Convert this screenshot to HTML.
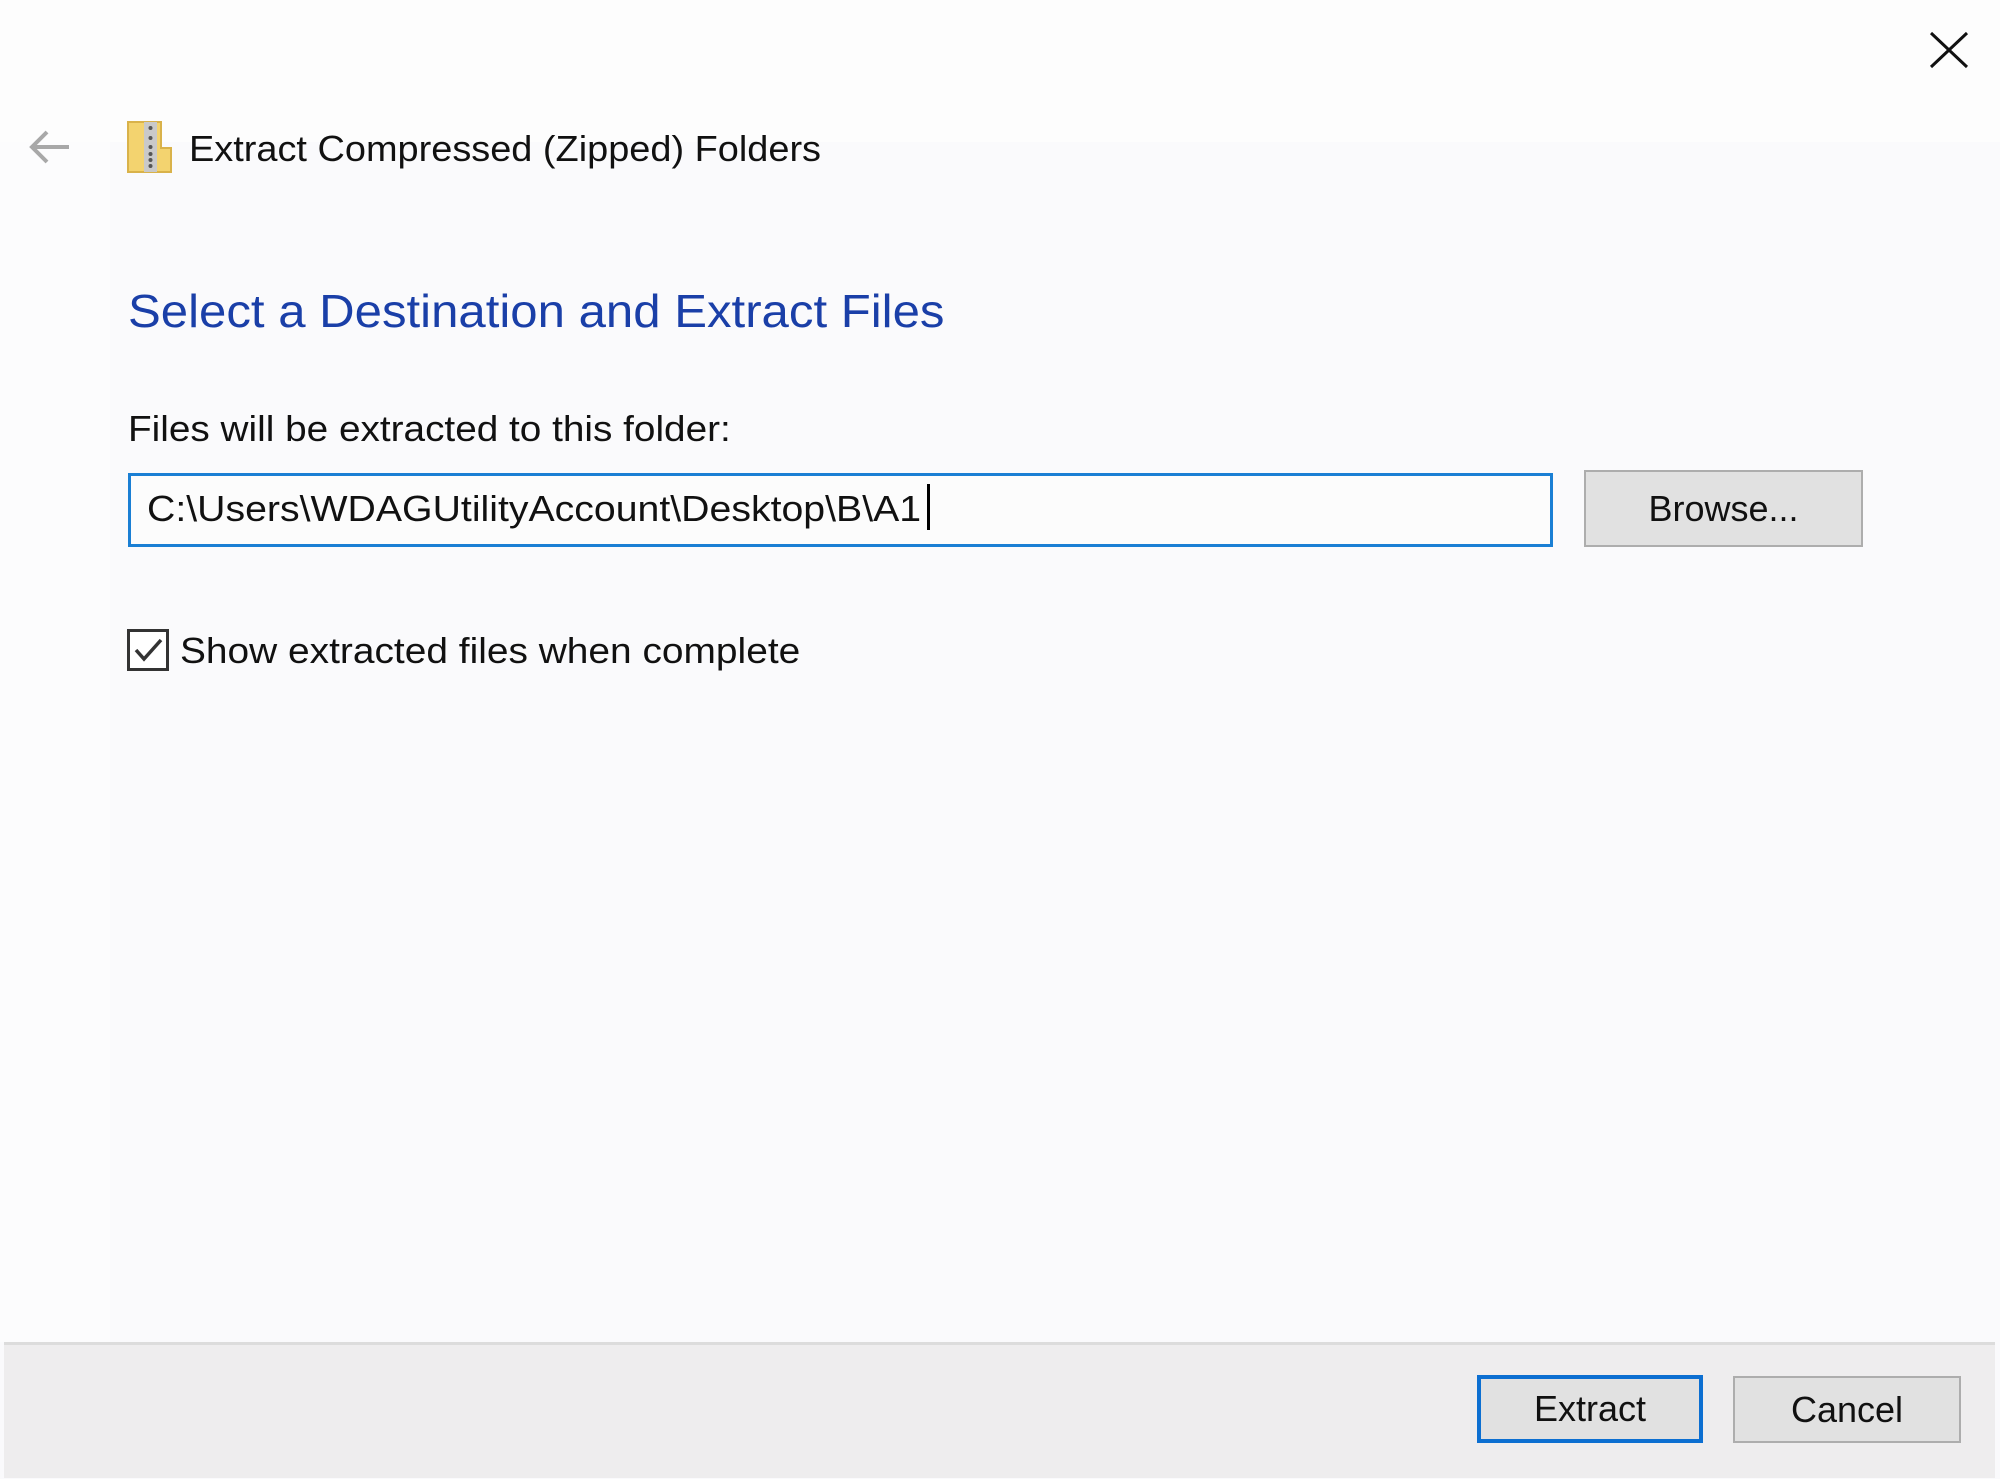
<!DOCTYPE html>
<html><head><meta charset="utf-8"><style>
html,body{margin:0;padding:0;}
body{width:2000px;height:1479px;position:relative;overflow:hidden;background:#fafafc;font-family:"Liberation Sans",sans-serif;color:#000;}
.a{position:absolute;white-space:nowrap;}
.sx{display:inline-block;transform-origin:0 0;}
</style></head><body>
<div class="a" style="left:0;top:0;width:2000px;height:142px;background:#fdfdfd"></div>
<div class="a" style="left:0;top:142px;width:110px;height:1200px;background:#fcfcfd"></div>
<svg class="a" style="left:1928px;top:30px" width="42" height="40" viewBox="0 0 42 40"><path d="M3 3 L39 37 M39 3 L3 37" stroke="#111" stroke-width="3" fill="none"/></svg>
<svg class="a" style="left:27px;top:128px" width="44" height="40" viewBox="0 0 44 40"><path d="M42 19 H5 M20 4 L5 19 L20 34" stroke="#a8a8a8" stroke-width="4" fill="none"/></svg>
<svg class="a" style="left:127px;top:120px" width="46" height="53" viewBox="0 0 46 53">
<path d="M1 2 H34 V28 H44 V52 H1 Z" fill="#f3d36f" stroke="#d9b24a" stroke-width="2"/>
<rect x="17" y="2" width="13" height="50" fill="#c9c9c9"/>
<g fill="#555"><circle cx="23.5" cy="8" r="2"/><circle cx="23.5" cy="18" r="2"/><circle cx="23.5" cy="27" r="2"/><circle cx="23.5" cy="34" r="2"/><circle cx="23.5" cy="40" r="2"/><circle cx="23.5" cy="46" r="2"/></g>
</svg>
<div class="a" style="left:189px;top:127px;font-size:36px;line-height:44px;color:#111"><span class="sx" style="transform:scaleX(1.053)">Extract Compressed (Zipped) Folders</span></div>
<div class="a" style="left:128px;top:283px;font-size:46px;line-height:56px;color:#1a3fa8"><span class="sx" style="transform:scaleX(1.068)">Select a Destination and Extract Files</span></div>
<div class="a" style="left:128px;top:407px;font-size:36px;line-height:44px;color:#111"><span class="sx" style="transform:scaleX(1.076)">Files will be extracted to this folder:</span></div>
<div class="a" style="left:128px;top:473px;width:1419px;height:68px;border:3px solid #1a7fd4;background:#fcfcfc"></div>
<div class="a" style="left:147px;top:487px;font-size:36px;line-height:44px;color:#111"><span class="sx" style="transform:scaleX(1.09)">C:\Users\WDAGUtilityAccount\Desktop\B\A1</span></div>
<div class="a" style="left:927px;top:484px;width:3px;height:46px;background:#000"></div>
<div class="a" style="left:1584px;top:470px;width:275px;height:73px;border:2px solid #adadad;background:#e1e1e1;text-align:center;font-size:36px;line-height:73px;color:#111">Browse...</div>
<div class="a" style="left:127px;top:629px;width:36px;height:36px;border:3px solid #333;background:#fff"></div>
<svg class="a" style="left:127px;top:629px" width="42" height="42" viewBox="0 0 42 42"><path d="M9 21 L17 30 L34 11" stroke="#333" stroke-width="3.5" fill="none"/></svg>
<div class="a" style="left:180px;top:629px;font-size:36px;line-height:44px;color:#111"><span class="sx" style="transform:scaleX(1.08)">Show extracted files when complete</span></div>
<div class="a" style="left:4px;top:1342px;width:1991px;height:133px;background:#eeedee;border-top:3px solid #dcdcdc"></div>
<div class="a" style="left:1477px;top:1375px;width:218px;height:60px;border:4px solid #0c6fd1;background:#e1e1e1;text-align:center;font-size:36px;line-height:60px;color:#111">Extract</div>
<div class="a" style="left:1733px;top:1376px;width:224px;height:63px;border:2px solid #adadad;background:#e1e1e1;text-align:center;font-size:36px;line-height:63px;color:#111">Cancel</div>
</body></html>
